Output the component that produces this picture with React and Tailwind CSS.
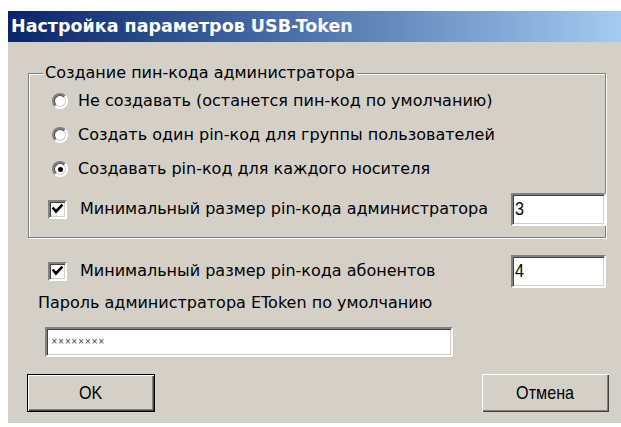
import React, { useState } from "react";

const sunken =
  "border-2 border-t-[#808080] border-l-[#808080] border-b-white border-r-white shadow-[inset_1px_1px_0_#404040,inset_-1px_-1px_0_#d4d0c8]";

// narrow system-style font used on buttons and edit boxes
const narrow = "font-['Liberation_Sans',sans-serif] text-[19px]";

function Radio({ checked, onClick }) {
  return (
    <div
      onClick={onClick}
      className="w-[16px] h-[16px] rounded-full border-2 border-t-[#808080] border-l-[#808080] border-b-white border-r-white flex items-center justify-center shrink-0"
    >
      <div className="w-full h-full rounded-full bg-white border border-t-[#404040] border-l-[#404040] border-b-[#d4d0c8] border-r-[#d4d0c8] flex items-center justify-center">
        {checked && <div className="w-[5px] h-[5px] rounded-full bg-black" />}
      </div>
    </div>
  );
}

function Checkbox({ checked, onClick }) {
  return (
    <div
      onClick={onClick}
      className={"w-[19px] h-[19px] bg-white flex items-center justify-center shrink-0 " + sunken}
    >
      {checked && (
        <svg width="13" height="13" viewBox="0 0 13 13">
          <path d="M2.5 5.5 L5 8.5 L10.5 2.5" fill="none" stroke="black" strokeWidth="2.6" strokeLinecap="square" />
        </svg>
      )}
    </div>
  );
}

function NumberBox({ value }) {
  return (
    <div className={"w-[95px] h-[33px] bg-white flex items-center pl-[2px] " + narrow + " " + sunken}>
      <span className="inline-block origin-left scale-x-[0.85]">{value}</span>
    </div>
  );
}

export default function App() {
  const [mode, setMode] = useState(2);
  const [adminMin, setAdminMin] = useState(true);
  const [userMin, setUserMin] = useState(true);

  const options = [
    "Не создавать (останется пин-код по умолчанию)",
    "Создать один pin-код для группы пользователей",
    "Создавать pin-код для каждого носителя",
  ];

  return (
    <div className="min-h-screen bg-white pt-[11px] pl-[8px] font-['DejaVu_Sans',sans-serif] text-[16px] text-black">
      <div className="w-[613px] h-[412px] bg-[#d4d0c8] flex flex-col">
        <div className="h-[31px] bg-gradient-to-r from-[#0a246a] to-[#a6caf0] flex items-center pl-[3px] text-white font-bold text-[17.5px]">
          Настройка параметров USB-Token
        </div>

        <div className="flex flex-col pl-[20px] pr-[15px]">
          {/* group box */}
          <div className="relative mt-[31px] h-[165px] border border-[#808080] shadow-[inset_1px_1px_0_#fff,1px_1px_0_#fff] flex flex-col pt-[10px] pl-[23px]">
            <div className="absolute left-[14px] top-[-10px] leading-[18px] px-[2px] bg-[#d4d0c8]">
              Создание пин-кода администратора
            </div>
            {options.map((label, i) => (
              <div key={i} className="h-[34px] flex items-center" onClick={() => setMode(i)}>
                <Radio checked={mode === i} />
                <span className="ml-[10px]">{label}</span>
              </div>
            ))}
            <div className="mt-[6px] h-[34px] flex items-center">
              <div className="ml-[-4px]">
                <Checkbox checked={adminMin} onClick={() => setAdminMin(!adminMin)} />
              </div>
              <span className="ml-[13px]">Минимальный размер pin-кода администратора</span>
              <div className="ml-auto mr-[-1px]">
                <NumberBox value="3" />
              </div>
            </div>
          </div>

          <div className="mt-[16px] h-[34px] flex items-center">
            <div className="ml-[20px]">
              <Checkbox checked={userMin} onClick={() => setUserMin(!userMin)} />
            </div>
            <span className="ml-[13px]">Минимальный размер pin-кода абонентов</span>
            <div className="ml-auto">
              <NumberBox value="4" />
            </div>
          </div>

          <div className="mt-[5px] h-[20px] leading-[20px] ml-[10px]">
            Пароль администратора EToken по умолчанию
          </div>

          <div className={"mt-[14px] ml-[17px] w-[408px] h-[30px] bg-white flex items-center pl-[4px] text-[8px] text-[#333] " + sunken}>
            ××××××××
          </div>

          <div className={"mt-[17px] flex justify-between ml-[-1px] mr-[-3px] " + narrow}>
            <button className="w-[128px] h-[38px] border border-black bg-[#d4d0c8] shadow-[inset_1px_1px_0_#fff,inset_-1px_-1px_0_#404040,inset_-2px_-2px_0_#808080]">
              <span className="inline-block scale-x-[0.85]">OK</span>
            </button>
            <button className="w-[127px] h-[38px] bg-[#d4d0c8] shadow-[inset_1px_1px_0_#fff,inset_-1px_-1px_0_#404040,inset_-2px_-2px_0_#808080]">
              <span className="inline-block scale-x-[0.85]">Отмена</span>
            </button>
          </div>
        </div>
      </div>
    </div>
  );
}
